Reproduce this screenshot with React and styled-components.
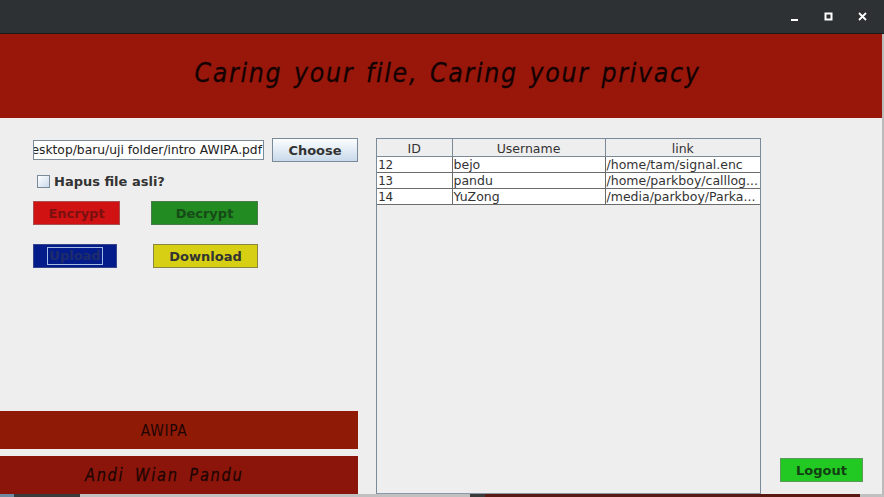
import styled, { createGlobalStyle } from "styled-components";

const Global = createGlobalStyle`
  html, body {
    margin: 0;
    padding: 0;
    background: #2d3033;
  }
  #root {
    width: 884px;
    height: 497px;
    overflow: hidden;
  }
`;

const Window = styled.div`
  width: 884px;
  height: 497px;
  display: flex;
  flex-direction: column;
  font-family: "DejaVu Sans", sans-serif;
  background: #eeeeee;
`;

const TitleBar = styled.div`
  height: 33px;
  background: #2d3134;
  border-bottom: 1px solid #1a1a1a;
  display: flex;
  justify-content: flex-end;
  align-items: center;
  gap: 16px;
  padding-right: 12px;
`;

const WinButton = styled.div`
  width: 18px;
  height: 18px;
  display: flex;
  align-items: center;
  justify-content: center;
`;

const Header = styled.div`
  height: 84px;
  background: #98170a;
  display: flex;
  align-items: center;
  justify-content: center;
  border-right: 2px solid #bbb;
`;

const Slogan = styled.div`
  display: inline-block;
  font-family: "DejaVu Sans", sans-serif;
  font-style: italic;
  font-size: 27px;
  letter-spacing: 1.9px;
  word-spacing: 3px;
  color: #140202;
  -webkit-text-stroke: 0.3px #140202;
  transform: scaleX(0.88);
  margin-left: 12px;
  margin-top: -8px;
  white-space: nowrap;
`;

const Body = styled.div`
  flex: 1;
  display: flex;
  border-right: 2px solid #bbb;
`;

const Left = styled.div`
  width: 358px;
  display: flex;
  flex-direction: column;
`;

const Form = styled.div`
  padding: 20px 0 0 33px;
  display: flex;
  flex-direction: column;
`;

const FileRow = styled.div`
  display: flex;
  align-items: center;
  gap: 8px;
`;

const FileField = styled.div`
  width: 228px;
  height: 18px;
  border: 1px solid #7a8a99;
  background: #fff;
  font-size: 12.3px;
  color: #222;
  line-height: 18px;
  white-space: nowrap;
  overflow: hidden;
  direction: rtl;
  text-align: left;
  padding-right: 1px;
`;

const ChooseButton = styled.div`
  width: 84px;
  height: 22px;
  border: 1px solid #7a8a99;
  background: linear-gradient(#fcfdfe, #dde8f3 60%, #c9d9ea);
  font-weight: bold;
  font-size: 13px;
  color: #333;
  display: flex;
  align-items: center;
  justify-content: center;
`;

const CheckRow = styled.label`
  display: flex;
  align-items: center;
  gap: 4px;
  margin: 12px 0 0 4px;
  font-weight: bold;
  font-size: 13px;
  color: #333;
`;

const Box = styled.span`
  width: 11px;
  height: 11px;
  border: 1px solid #7a8a99;
  background: linear-gradient(135deg, #fff, #c9d9ea);
`;

const ButtonRow = styled.div`
  display: flex;
  align-items: center;
  margin-top: ${(p) => p.top}px;
`;

const ColorButton = styled.div`
  width: ${(p) => p.w}px;
  height: 22px;
  margin-left: ${(p) => p.ml || 0}px;
  border: 1px solid ${(p) => p.edge};
  background: ${(p) => p.bg};
  color: ${(p) => p.fg};
  font-weight: bold;
  font-size: 13px;
  display: flex;
  align-items: center;
  justify-content: center;
`;

const Focus = styled.span`
  border: 1px solid #a3bde3;
  padding: 0 1px;
  line-height: 16px;
`;

const Bars = styled.div`
  margin-top: auto;
  display: flex;
  flex-direction: column;
  gap: 7px;
`;

const Bar = styled.div`
  height: ${(p) => p.h}px;
  background: ${(p) => p.bg};
  display: flex;
  align-items: center;
  justify-content: center;
  padding-right: 30px;
  color: #1d0502;
`;

const BarText = styled.span`
  display: inline-block;
  font-family: "DejaVu Sans", sans-serif;
  font-size: ${(p) => p.size}px;
  font-style: ${(p) => (p.italic ? "italic" : "normal")};
  letter-spacing: ${(p) => (p.italic ? 2 : 0.8)}px;
  word-spacing: ${(p) => (p.italic ? 5 : 0)}px;
  -webkit-text-stroke: ${(p) => (p.italic ? 0.3 : 0)}px #1d0502;
  transform: scaleX(0.86);
  white-space: nowrap;
`;

const TablePanel = styled.div`
  width: 383px;
  margin: 20px 0 0 18px;
  border: 1px solid #7a8a99;
  border-bottom-color: #8a98a5;
  background: #eeeeee;
  align-self: stretch;
`;

const Table = styled.table`
  border-collapse: collapse;
  width: 100%;
  table-layout: fixed;
  font-size: 12.5px;
  color: #333;
`;

const Th = styled.th`
  font-weight: normal;
  height: 16px;
  padding: 1px 0 0;
  background: #eeeeee;
  border: 1px solid #7a8a99;
  border-top: none;
  text-align: center;
  &:first-child { border-left: none; }
  &:last-child { border-right: none; }
`;

const Td = styled.td`
  height: 15px;
  padding: 0 0 0 1px;
  background: #fff;
  border: 1px solid #6b6b6b;
  white-space: nowrap;
  overflow: hidden;
  line-height: 15px;
  font-family: ${(p) => (p.mono ? '"DejaVu Sans Mono", monospace' : '"DejaVu Sans", sans-serif')};
  &:first-child { border-left: none; }
  &:last-child { border-right: none; }
`;

const Right = styled.div`
  flex: 1;
  display: flex;
  align-items: flex-end;
  justify-content: flex-end;
  padding: 0 19px 12px 0;
`;

const LogoutButton = styled.div`
  width: 81px;
  height: 22px;
  background: #22c922;
  border: 1px solid #5c9a5c;
  color: #124012;
  font-weight: bold;
  font-size: 13px;
  display: flex;
  align-items: center;
  justify-content: center;
`;

const BottomStrip = styled.div`
  height: 3px;
  background: linear-gradient(90deg, #6d8aa0 0 14px, #3a3a3a 14px 80px, #c0c0c0 80px 470px, #3a3a3a 470px 485px, #5a1a14 485px 860px, #c0c0c0 860px);
`;

const rows = [
  { id: 12, user: "bejo", link: "/home/tam/signal.enc" },
  { id: 13, user: "pandu", link: "/home/parkboy/calllog..." },
  { id: 14, user: "YuZong", link: "/media/parkboy/Parka..." },
];

export default function App() {
  return (
    <Window>
      <Global />
      <TitleBar>
        <WinButton>
          <svg width="10" height="10" viewBox="0 0 10 10">
            <rect x="1" y="7" width="7" height="2" fill="#fff" />
          </svg>
        </WinButton>
        <WinButton>
          <svg width="10" height="10" viewBox="0 0 10 10">
            <rect x="1.5" y="1.5" width="6" height="6" fill="none" stroke="#fff" strokeWidth="2" />
          </svg>
        </WinButton>
        <WinButton>
          <svg width="10" height="10" viewBox="0 0 10 10">
            <path d="M1 1 L8 8 M8 1 L1 8" stroke="#fff" strokeWidth="1.8" />
          </svg>
        </WinButton>
      </TitleBar>
      <Header>
        <Slogan>Caring your file, Caring your privacy</Slogan>
      </Header>
      <Body>
        <Left>
          <Form>
            <FileRow>
              <FileField>{"\u200E/home/tam/Desktop/baru/uji folder/intro AWIPA.pdf"}</FileField>
              <ChooseButton>Choose</ChooseButton>
            </FileRow>
            <CheckRow>
              <Box />
              Hapus file asli?
            </CheckRow>
            <ButtonRow top={12}>
              <ColorButton w={85} bg="#d01212" edge="#a85050" fg="#7a1010">Encrypt</ColorButton>
              <ColorButton w={105} ml={31} bg="#228b22" edge="#4b7a4b" fg="#164a16">Decrypt</ColorButton>
            </ButtonRow>
            <ButtonRow top={19}>
              <ColorButton w={82} bg="#041c8a" edge="#36458a" fg="#1e2c6a">
                <Focus>Upload</Focus>
              </ColorButton>
              <ColorButton w={103} ml={36} bg="#d6cf14" edge="#8a8640" fg="#333">Download</ColorButton>
            </ButtonRow>
          </Form>
          <Bars>
            <Bar h={38} bg="#8f1a06">
              <BarText size={16}>AWIPA</BarText>
            </Bar>
            <Bar h={38} bg="#8c150b">
              <BarText size={17} italic>Andi Wian Pandu</BarText>
            </Bar>
          </Bars>
        </Left>
        <TablePanel>
          <Table>
            <colgroup>
              <col style={{ width: 75 }} />
              <col style={{ width: 153 }} />
              <col />
            </colgroup>
            <thead>
              <tr>
                <Th>ID</Th>
                <Th>Username</Th>
                <Th>link</Th>
              </tr>
            </thead>
            <tbody>
              {rows.map((r) => (
                <tr key={r.id}>
                  <Td mono>{r.id}</Td>
                  <Td>{r.user}</Td>
                  <Td>{r.link}</Td>
                </tr>
              ))}
            </tbody>
          </Table>
        </TablePanel>
        <Right>
          <LogoutButton>Logout</LogoutButton>
        </Right>
      </Body>
      <BottomStrip />
    </Window>
  );
}
